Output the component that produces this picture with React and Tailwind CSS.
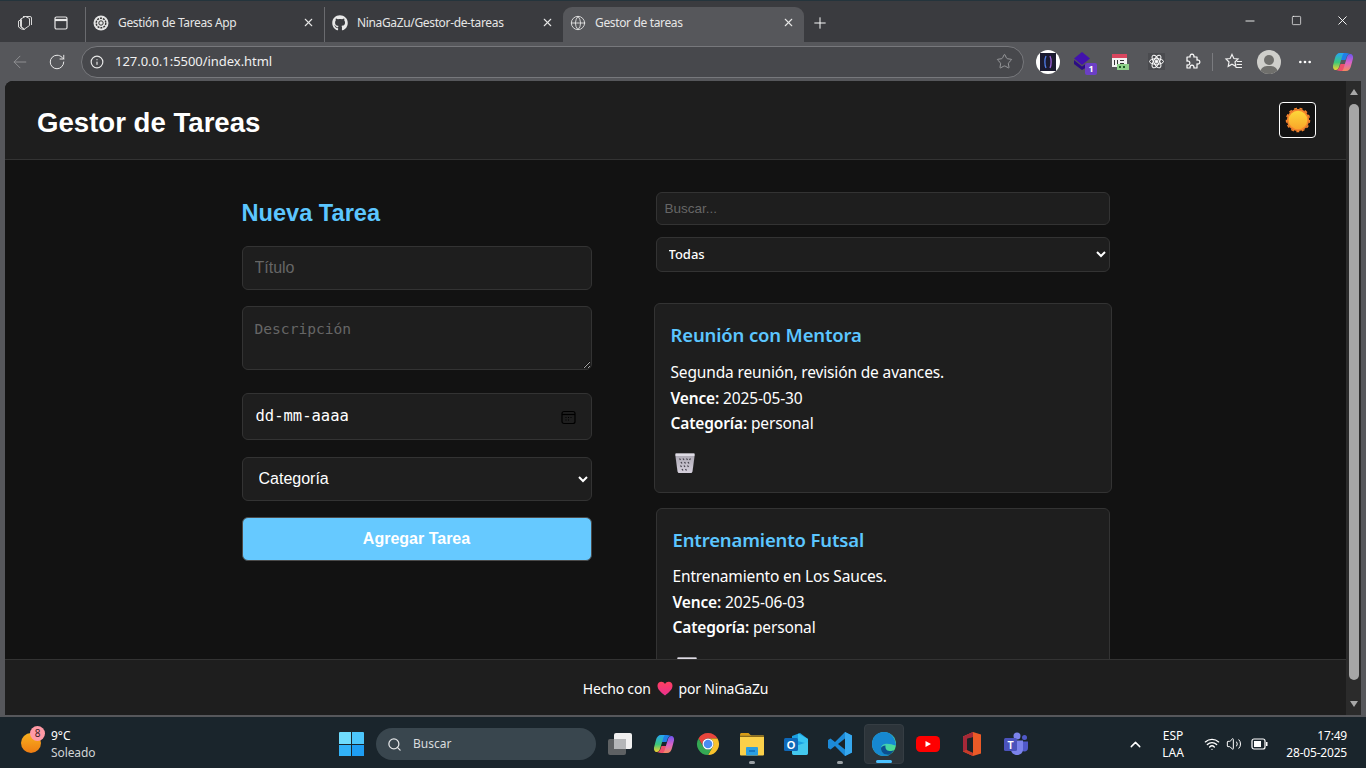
import { X, Plus, Minus, Square, ArrowLeft, RotateCw, Info, Star, Ellipsis, Search, ChevronUp, Wifi, Volume2, Globe } from 'lucide-react'
import { FaGithub } from 'react-icons/fa'

const ui = "font-['Noto_Sans',sans-serif]"

function Tab({ icon, title, active }) {
  return (
    <div className={`flex items-center h-[35px] pb-[4px] pl-[6px] pr-[6px] ${active ? 'w-[241px] bg-[#56575b] rounded-t-[9px]' : 'w-[239px] border-l border-[#6a6b6f]'}`}>
      <span className="w-[17px] h-[17px] flex items-center justify-center text-[#e8e8e8]">{icon}</span>
      <span className={`ml-[9px] flex-1 text-[12px] tracking-[-0.35px] text-[#e6e6e6] ${ui}`}>{title}</span>
      <X size={13} className="text-[#e6e6e6] mr-[3px]" />
    </div>
  )
}

function ChatIcon() {
  return (
    <svg width="16" height="16" viewBox="0 0 16 16">
      <circle cx="8" cy="8" r="7.5" fill="#e4e4e4" />
      <circle cx="8" cy="8" r="4.8" fill="none" stroke="#333" strokeWidth="1.4" strokeDasharray="2 1" />
      <circle cx="8" cy="8" r="2.2" fill="none" stroke="#333" strokeWidth="1" />
    </svg>
  )
}

function Workspaces() {
  return (
    <svg width="18" height="18" viewBox="0 0 18 18" fill="none" stroke="#d8d8d8" strokeWidth="1">
      <path d="M7 2.500h7a1.500 1.500 0 0 1 1.500 1.500v7" />
      <path d="M4.500 5l5-2.500 4 2v7l-5 3.500-4-2.500z" />
      <path d="M2.500 7l3-1.500v8l3 2-3-.5-3-2z" />
    </svg>
  )
}

function TabActions() {
  return (
    <svg width="16" height="16" viewBox="0 0 16 16" fill="none" stroke="#e8e8e8" strokeWidth="1.2">
      <rect x="2" y="2" width="12" height="12" rx="1.5" />
      <path d="M2 5h12" strokeWidth="2.2" />
    </svg>
  )
}

function Copilot({ id, size = 24 }) {
  return (
    <svg width={size} height={size} viewBox="0 0 24 24">
      <defs>
        <linearGradient id={`${id}l`} x1="0" y1="0" x2="0" y2="1">
          <stop offset="0" stopColor="#25a5f6" />
          <stop offset=".55" stopColor="#3cc77a" />
          <stop offset="1" stopColor="#f7d22e" />
        </linearGradient>
        <linearGradient id={`${id}r`} x1="0" y1="0" x2="0" y2="1">
          <stop offset="0" stopColor="#6d55f0" />
          <stop offset=".5" stopColor="#d863c9" />
          <stop offset="1" stopColor="#f58a5d" />
        </linearGradient>
      </defs>
      <path d="M9 3h6c2 0 3 1 4 1-2 0-3 1.500-3.500 3l-1 3H10z" fill="#1f7fe8" />
      <path d="M15 21H9c-2 0-3-1-4-1 2 0 3-1.500 3.500-3l1-3H14z" fill="#ee4f6a" />
      <path d="M9 3h4c-1 1-1.500 2-2 4l-3 10c-.4 1.500-1.500 3-3.500 3C3 20 1.500 18 2 15.500L4 8c.6-3 2.500-5 5-5z" fill={`url(#${id}l)`} />
      <path d="M15 21h-4c1-1 1.500-2 2-4l3-10c.4-1.500 1.500-3 3.500-3 1.500 0 3 2 2.500 4.500L20 16c-.6 3-2.500 5-5 5z" fill={`url(#${id}r)`} />
    </svg>
  )
}

function ToolbarIcons() {
  return (
    <div className="flex items-center">
      <div className="w-[24px] h-[24px] rounded-full bg-white flex items-center justify-center">
        <svg width="16" height="18" viewBox="0 0 16 18">
          <rect width="16" height="18" fill="#1b1b30" />
          <path d="M6 3C4.500 6 4.500 12 6 15" fill="none" stroke="#4f7de8" strokeWidth="1.300" />
          <path d="M10 3c1.500 3 1.500 9 0 12" fill="none" stroke="#9a5fd8" strokeWidth="1.300" />
        </svg>
      </div>
      <div className="relative w-[24px] h-[24px] ml-[12px]">
        <svg width="20" height="20" viewBox="0 0 20 20" className="mt-[1px] ml-[1px]">
          <path d="M9 1l8 6.500-8 6.500-8-6.500z" fill="#4212ae" />
          <path d="M1 9l8 6.500L14 12v4l-5 3-8-6z" fill="#2c0d85" />
        </svg>
        <span className={`absolute right-[-1px] bottom-[-1px] w-[12px] h-[12px] rounded-[2px] bg-[#6b3fc4] text-white text-[9px] leading-[12px] font-bold text-center ${ui}`}>1</span>
      </div>
      <svg className="ml-[12px]" width="24" height="24" viewBox="0 0 24 24">
        <rect x="4" y="4" width="15" height="4" fill="#d9465f" />
        <rect x="4" y="8" width="15" height="9" fill="#f2f2f2" />
        <path d="M6 10h1v5H6zM9 10h1v5H9zM12 10h4v1h-4zM12 13h4v1h-4z" fill="#333" />
        <rect x="9" y="14" width="12" height="6" fill="#8fd18a" />
        <path d="M11 16h2v2h-2zM15 16h2v2h-2z" fill="#1c5c24" />
      </svg>
      <div className="w-[24px] h-[24px] ml-[12px] flex items-center justify-center">
        <svg width="17" height="17" viewBox="0 0 17 17" fill="none" stroke="#fff" strokeWidth="1">
          <rect width="17" height="17" fill="#4a4b4f" stroke="none" />
          <ellipse cx="8.500" cy="8.500" rx="7" ry="2.800" />
          <ellipse cx="8.500" cy="8.500" rx="7" ry="2.800" transform="rotate(60 8.500 8.500)" />
          <ellipse cx="8.500" cy="8.500" rx="7" ry="2.800" transform="rotate(120 8.500 8.500)" />
          <circle cx="8.500" cy="8.500" r="1.300" fill="#fff" />
        </svg>
      </div>
      <svg className="ml-[15px]" width="18" height="18" viewBox="0 0 18 18" fill="none" stroke="#fff" strokeWidth="1.200" strokeLinejoin="round">
        <path d="M4 4h3.200a2 2 0 1 1 3.600 0H14v3.200a2 2 0 1 1 0 3.600V15H10.800a2 2 0 1 0-3.600 0H4v-3.200a2 2 0 1 0 0-3.600z" />
      </svg>
      <div className="w-px h-[18px] bg-[#7a7b7f] ml-[11px]" />
      <div className="ml-[11px]">
        <svg width="20" height="20" viewBox="0 0 20 20" fill="none" stroke="#f0f0f0" strokeWidth="1.200">
          <path d="M8 2.500l1.900 4 4.100.5-3 3 .8 4.400L8 12.300l-3.800 2.100.8-4.400-3-3 4.100-.5z" />
          <path d="M13 9.500h5M12.500 12.500h5.500M11.500 15.500h6.500" />
        </svg>
      </div>
      <div className="relative ml-[13px] w-[24px] h-[24px] rounded-full bg-[#cfcfcb] overflow-hidden">
        <div className="absolute left-[7px] top-[5px] w-[10px] h-[10px] rounded-full bg-[#6f6f6c]" />
        <div className="absolute left-[3px] top-[16px] w-[18px] h-[14px] rounded-full bg-[#6f6f6c]" />
      </div>
      <Ellipsis size={16} className="ml-[16px] text-white" />
      <div className="ml-[18px]"><Copilot id="cpt" size={24} /></div>
    </div>
  )
}

function TrashIcon({ className }) {
  return (
    <svg className={className} width="22" height="22" viewBox="0 0 22 22">
      <defs>
        <linearGradient id="trash" x1="0" y1="0" x2="0" y2="1">
          <stop offset="0" stopColor="#a9a5b0" />
          <stop offset="1" stopColor="#d5d0dc" />
        </linearGradient>
      </defs>
      <path d="M1.500 1.500h19v3l-2 15c-.2.800-.8 1.500-1.600 1.500H5.100c-.8 0-1.400-.7-1.600-1.500l-2-15z" fill="url(#trash)" />
      <rect x="1.500" y="1.500" width="19" height="2.500" rx=".5" fill="#dedbe4" />
      <path d="M5.500 6.500l1 1.500M9 6.500l1 1.500M12.500 6.500l1 1.500M16.500 6.500l-1 1.500M7 10l1 1.500M10.500 10l1 1.500M14 10l1 1.500M6.500 13.500l1 1.500M10 13.500l1 1.500M13.500 13.500l1 1.500M8 17l1 1.500M11.500 17l1 1.500" stroke="#45424c" strokeWidth="1.300" />
    </svg>
  )
}

function Card({ title, text, date, shifted }) {
  return (
    <div className={`bg-[#1e1e1e] border border-[#333] rounded-[6px] shrink-0 pt-[16px] pl-[16px] ${shifted ? 'w-[458px] -mx-[2px] h-[190px]' : 'w-[454px] mt-[15px] pb-[20px]'}`}>
      <h3 className={`text-[#5cc6ff] text-[18.500px] leading-[30px] font-semibold tracking-[-0.15px] ${ui}`}>{title}</h3>
      <div className={`${shifted ? 'mt-[10px]' : 'mt-[9px]'} text-white text-[15.500px] leading-[25.600px] tracking-[-0.15px] ${ui}`}>
        <p>{text}</p>
        <p><b className="font-semibold">Vence:</b> {date}</p>
        <p><b className="font-semibold">Categoría:</b> personal</p>
      </div>
      <TrashIcon className="mt-[15px] ml-[3px]" />
    </div>
  )
}

function ChromeLogo() {
  return (
    <svg width="24" height="24" viewBox="0 0 24 24">
      <path d="M2.470 6.500A11 11 0 0 1 21.530 6.500H12A5.500 5.500 0 0 0 7.240 14.750z" fill="#e8453c" />
      <path d="M21.530 6.500A11 11 0 0 1 12 23L16.760 14.750A5.500 5.500 0 0 0 12 6.500z" fill="#f8c22c" />
      <path d="M12 23A11 11 0 0 1 2.470 6.500L7.240 14.750A5.500 5.500 0 0 0 16.760 14.750z" fill="#34a853" />
      <circle cx="12" cy="12" r="5.500" fill="#fff" />
      <circle cx="12" cy="12" r="4.300" fill="#4a8cf0" />
    </svg>
  )
}

function Explorer() {
  return (
    <svg width="24" height="24" viewBox="0 0 24 24">
      <path d="M0 2.500C0 1.700.7 1 1.500 1h7l3 3H0z" fill="#d89b14" />
      <rect y="3.500" width="24" height="20" rx="1" fill="#fbd04a" />
      <rect y="3.500" width="24" height="1.500" fill="#8a6a1a" />
      <rect x="6" y="15" width="12" height="8.500" rx="1" fill="#2b9ee0" />
      <rect x="9" y="18" width="6" height="2" fill="#1678c2" />
    </svg>
  )
}

function Outlook() {
  return (
    <svg width="24" height="24" viewBox="0 0 24 24">
      <path d="M8 4l8-3 8 6v14c0 1-1 2-2 2H10c-1 0-2-1-2-2z" fill="#1ba0e2" />
      <path d="M14 1.500l10 5.500v5l-10-3z" fill="#38c4f2" />
      <path d="M8 15l16-5v11c0 1-1 2-2 2H10c-1 0-2-1-2-2z" fill="#43c8ee" />
      <rect y="6" width="14" height="13" rx="1.500" fill="#0e68b8" />
      <text x="7" y="16.500" textAnchor="middle" fontSize="11" fontWeight="700" fill="#fff" fontFamily="Liberation Sans">O</text>
    </svg>
  )
}

function VsCode() {
  return (
    <svg width="24" height="24" viewBox="0 0 24 24">
      <path d="M17 0l7 3.500v17L17 24 7 14 2.500 17.500 0 16v-8l2.500-1.500L7 10z" fill="#1c8ad8" />
      <path d="M17 0l7 3.500v17L17 24z" fill="#36a8ef" />
      <path d="M17 6.500L10 12l7 5.500z" fill="#1a2228" />
    </svg>
  )
}

function Edge() {
  return (
    <svg width="24" height="24" viewBox="0 0 24 24">
      <defs>
        <linearGradient id="edgeg" x1="0" y1="0" x2="1" y2="1">
          <stop offset="0" stopColor="#35c1f1" />
          <stop offset="1" stopColor="#4ee07a" />
        </linearGradient>
      </defs>
      <circle cx="12" cy="12" r="12" fill="url(#edgeg)" />
      <path d="M0 12c0 7 5.500 12 12 12 2.500 0 4.500-.6 6-1.600-4.500 1-9-1.400-9-6 0-2.200 1.500-4 4-4.400 4-.6 7 .8 11 1.500C23.500 6 19 0 12 0 5 0 0 5.500 0 12z" fill="#1688d0" />
      <path d="M9 16.500c0 4.500 4 7 9 5.900 1.500-1 3-2.300 4-4.400-1.200.8-3 1.200-4.500 1-3-.3-4.500-2.500-4-5.500-2.500.4-4.500 1-4.500 3z" fill="#0c4f8f" />
    </svg>
  )
}

function YouTube() {
  return (
    <svg width="24" height="16" viewBox="0 0 24 16">
      <rect width="24" height="16" rx="4.500" fill="#f00" />
      <path d="M9.500 5l5.500 3-5.500 3z" fill="#fff" />
    </svg>
  )
}

function Office() {
  return (
    <svg width="18" height="24" viewBox="0 0 18 24">
      <path d="M10 0l8 2.500v19L10 24 0 19.500V4.500z" fill="#eb5a27" />
      <path d="M10 0L0 4.500v15L4 18V6.500l6-1.500z" fill="#a52838" />
      <path d="M4 6.500l6-1.500v16l-6-2z" fill="#1a2228" />
      <path d="M0 19.500L10 24v-3l-6-3z" fill="#c73a2a" />
    </svg>
  )
}

function Teams() {
  return (
    <svg width="24" height="24" viewBox="0 0 24 24">
      <circle cx="13" cy="4" r="3.500" fill="#7b83eb" />
      <circle cx="20.500" cy="5.500" r="2.500" fill="#5059c9" />
      <path d="M17 9.500h7v6.500c0 2-1.500 3.500-3.500 3.500S17 18 17 16z" fill="#5059c9" />
      <path d="M7 8.500h12v9c0 3-2.500 5.500-6 5.500s-6-2.500-6-5.500z" fill="#7b83eb" />
      <rect y="6" width="13" height="13" rx="1.500" fill="#4b53bc" />
      <text x="6.500" y="16.500" textAnchor="middle" fontSize="10" fontWeight="700" fill="#fff" fontFamily="Liberation Sans">T</text>
    </svg>
  )
}

function TaskIcon({ children, active, dot }) {
  return (
    <div className={`relative w-[40px] h-[40px] mx-[2px] flex items-center justify-center rounded-[4px] ${active ? 'bg-[#2c343a] border border-[#353d43]' : ''}`}>
      {children}
      {dot && <span className="absolute bottom-0 left-[17px] w-[6px] h-[3px] rounded-full bg-[#9aa0a4]" />}
      {active && <span className="absolute bottom-0 left-[11px] w-[16px] h-[3px] rounded-full bg-[#4cc2ff]" />}
    </div>
  )
}

function Taskbar() {
  return (
    <div className={`h-[51px] shrink-0 bg-[#1a252c] pt-[3px] flex items-center text-white ${ui}`}>
      <div className="w-[339px] flex items-center pl-[20px] shrink-0">
        <div className="relative w-[26px] h-[30px]">
          <div className="absolute left-[1px] top-[4px] w-[20px] h-[20px] rounded-full bg-gradient-to-b from-[#f7b11f] to-[#ee7c12]" />
          <span className="absolute left-[10px] top-[-3px] w-[15px] h-[15px] rounded-full bg-[#ff9aa6] text-[#3a1a1f] text-[10px] leading-[15px] text-center">8</span>
        </div>
        <div className="ml-[5px] -mt-[1px]">
          <div className="text-[12px] leading-[17px]">9°C</div>
          <div className="text-[12px] leading-[17px] tracking-[-0.1px] text-[#d0d4d6]">Soleado</div>
        </div>
      </div>
      <div className="w-[25px] h-[24px] grid grid-cols-2 gap-[1px] shrink-0">
        <span className="bg-[#6fdcfd] rounded-tl-[1px]" />
        <span className="bg-[#4cc6fb] rounded-tr-[1px]" />
        <span className="bg-[#32b2f8]" />
        <span className="bg-[#1e9df2]" />
      </div>
      <div className="ml-[12px] w-[220px] h-[32px] rounded-full bg-[#39464e] flex items-center pl-[11px] shrink-0">
        <Search size={15} className="text-[#e4e6e8]" strokeWidth={2} />
        <span className="ml-[11px] text-[12px] text-[#d8dcde]">Buscar</span>
      </div>
      <div className="ml-[2px] flex items-center shrink-0">
        <TaskIcon>
          <div className="relative w-[24px] h-[22px]">
            <span className="absolute left-0 bottom-0 w-[18px] h-[16px] rounded-[2px] bg-[#5e6163]" />
            <span className="absolute right-0 top-0 w-[18px] h-[16px] rounded-[2px] bg-[#f0f0f0]" />
            <span className="absolute left-[6px] top-[6px] w-[12px] h-[10px] bg-[#b4b6b8]" />
          </div>
        </TaskIcon>
        <TaskIcon><Copilot id="cpb" size={24} /></TaskIcon>
        <TaskIcon><ChromeLogo /></TaskIcon>
        <TaskIcon dot><Explorer /></TaskIcon>
        <TaskIcon><Outlook /></TaskIcon>
        <TaskIcon dot><VsCode /></TaskIcon>
        <TaskIcon active><Edge /></TaskIcon>
        <TaskIcon><YouTube /></TaskIcon>
        <TaskIcon><Office /></TaskIcon>
        <TaskIcon><Teams /></TaskIcon>
      </div>
      <ChevronUp size={17} className="ml-[89px] shrink-0 text-white" />
      <div className="ml-[12px] w-[34px] shrink-0 text-center text-[12px] leading-[17px] text-white">
        <div>ESP</div>
        <div>LAA</div>
      </div>
      <Wifi size={16} className="ml-[14px] shrink-0 text-white" />
      <Volume2 size={16} className="ml-[6px] shrink-0 text-white" strokeWidth={1.500} />
      <svg className="ml-[9px] shrink-0" width="18" height="12" viewBox="0 0 18 12" fill="none">
        <rect x="1" y="1" width="13" height="10" rx="2" stroke="#fff" strokeWidth="1.200" />
        <rect x="3" y="3" width="7" height="6" fill="#fff" />
        <rect x="15" y="4" width="1.500" height="4" fill="#fff" />
      </svg>
      <div className="ml-[12px] w-[66px] shrink-0 text-right text-[12px] leading-[17px] tracking-[-0.2px]">
        <div>17:49</div>
        <div>28-05-2025</div>
      </div>
    </div>
  )
}

export default function App() {
  const field = "block w-full shrink-0 bg-[#1e1e1e] border border-[#333] rounded-[6px] text-white outline-none"
  return (
    <div className="w-[1366px] h-[768px] flex flex-col overflow-hidden bg-[#56575b]">
      {/* tabs */}
      <div className="h-[42px] shrink-0 bg-[#3a3b3f] border-t border-[#24343c] flex items-end">
        <div className="w-[85px] h-[35px] pb-[4px] flex items-center pl-[16px] shrink-0">
          <Workspaces />
          <span className="ml-[19px]"><TabActions /></span>
        </div>
        <Tab icon={<ChatIcon />} title="Gestión de Tareas App" />
        <Tab icon={<FaGithub size={16} />} title="NinaGaZu/Gestor-de-tareas" />
        <Tab icon={<Globe size={16} strokeWidth={1.300} />} title="Gestor de tareas" active />
        <Plus size={18} strokeWidth={1.300} className="ml-[7px] mb-[10px] text-white shrink-0" />
        <div className="flex-1" />
        <div className="flex items-center mb-[14px] text-white">
          <Minus size={14} strokeWidth={1.500} />
          <Square size={11} strokeWidth={1.500} className="ml-[34px]" />
          <X size={15} strokeWidth={1.500} className="ml-[33px] mr-[16px]" />
        </div>
      </div>

      {/* toolbar */}
      <div className="h-[39px] shrink-0 flex items-center">
        <ArrowLeft size={20} strokeWidth={1.200} className="ml-[10px] text-[#8e8f92]" />
        <RotateCw size={18} strokeWidth={1.300} className="ml-[18px] text-[#ececec]" />
        <div className="ml-[15px] w-[943px] h-[32px] rounded-full border border-[#77787c] bg-[#47484c] flex items-center">
          <Info size={14} className="ml-[8px] text-[#e8e8e8]" />
          <span className={`ml-[11px] flex-1 text-[13px] text-[#f0f0f0] tracking-[-0.04px] ${ui}`}>127.0.0.1:5500/index.html</span>
          <Star size={17} strokeWidth={1.200} className="mr-[10px] text-[#a4a5a8]" />
        </div>
        <div className="ml-[12px]"><ToolbarIcons /></div>
      </div>

      {/* page */}
      <div className="flex-1 min-h-0 flex pl-[5px] pr-[5px] pb-[2px]">
        <div className="w-[1341px] flex flex-col rounded-tl-[8px] overflow-hidden bg-[#121212]">
          <header className="h-[79px] shrink-0 bg-[#1e1e1e] border-b border-[#333] flex items-center justify-between pl-[32px] pr-[30px]">
            <h1 className="mt-[6px] text-white text-[27.600px] font-bold font-['Liberation_Sans',sans-serif]">Gestor de Tareas</h1>
            <button className="w-[37px] h-[36px] rounded-[4px] border border-white bg-[#121212] flex items-center justify-center">
              <svg width="26" height="26" viewBox="0 0 26 26">
                <defs>
                  <linearGradient id="sun" x1="0" y1="0" x2="0" y2="1">
                    <stop offset="0" stopColor="#fdd83a" />
                    <stop offset="1" stopColor="#f9a62a" />
                  </linearGradient>
                </defs>
                <circle cx="13" cy="13" r="11" fill="#f5842c" />
                <circle cx="13" cy="13" r="11.500" fill="none" stroke="#f5842c" strokeWidth="1.500" strokeDasharray="3 2.540" />
                <circle cx="13" cy="13" r="9.300" fill="url(#sun)" />
              </svg>
            </button>
          </header>

          <main className="flex-1 min-h-0 overflow-hidden flex justify-center gap-[64px]">
            <section className="w-[350px] shrink-0 font-['Liberation_Sans',sans-serif]">
              <h2 className="mt-[39px] text-[#5cc6ff] text-[23.600px] leading-[28px] font-bold">Nueva Tarea</h2>
              <input className={`${field} mt-[19px] h-[44px] px-[12px] text-[16px] placeholder:text-[#666]`} placeholder="Título" />
              <textarea className={`${field} mt-[16px] h-[64px] px-[12px] pt-[11px] text-[14.600px] font-['DejaVu_Sans_Mono',monospace] placeholder:text-[#666]`} placeholder="Descripción" />
              <div className={`${field} mt-[23px] h-[47px] pl-[13px] pr-[15px] pt-[1px] flex items-center justify-between text-[15.500px] font-['DejaVu_Sans_Mono',monospace]`}>
                <span>dd-mm-aaaa</span>
                <svg width="15" height="15" viewBox="0 0 15 15" fill="none" stroke="#000" strokeWidth="1.200">
                  <rect x="1" y="1.500" width="13" height="12" rx="2" />
                  <path d="M1 4.500h13" />
                  <path d="M4.500 7.500h1M7 7.500h1M9.500 7.500h1M4.500 10h1M7 10h1" />
                </svg>
              </div>
              <select className={`${field} mt-[17px] h-[44px] pl-[12px] pb-[2px] text-[16px]`} defaultValue="Categoría">
                <option>Categoría</option>
              </select>
              <button className="block w-full mt-[16px] h-[44px] rounded-[6px] bg-[#66c9ff] border border-[#4a4a4a] text-white text-[16px] font-bold">Agregar Tarea</button>
            </section>

            <section className="w-[454px] shrink-0 flex flex-col">
              <input className={`${field} mt-[32px] h-[33px] px-[8px] text-[13.500px] font-['Liberation_Sans',sans-serif] placeholder:text-[#666]`} placeholder="Buscar..." />
              <select className={`${field} mt-[12px] h-[35px] pl-[8px] pb-[2px] text-[13px] font-medium ${ui}`} defaultValue="Todas">
                <option>Todas</option>
              </select>
              <div className="mt-[31px] shrink-0"><Card shifted title="Reunión con Mentora" text="Segunda reunión, revisión de avances." date="2025-05-30" /></div>
              <Card title="Entrenamiento Futsal" text="Entrenamiento en Los Sauces." date="2025-06-03" />
            </section>
          </main>

          <footer className={`h-[56px] shrink-0 relative bg-[#1e1e1e] border-t border-[#333] pt-[2px] flex items-center justify-center text-white text-[14px] tracking-[-0.2px] ${ui}`}>
            <span>Hecho con</span>
            <svg className="mx-[6px]" width="16" height="15" viewBox="0 0 16 15">
              <defs>
                <linearGradient id="heart" x1="0" y1="0" x2="0" y2="1">
                  <stop offset="0" stopColor="#ff4060" />
                  <stop offset="1" stopColor="#e8308e" />
                </linearGradient>
              </defs>
              <path d="M8 14.500C4 11.500.5 8.500.5 4.800.5 2.400 2.300.8 4.300.8 5.800.8 7.200 1.600 8 3c.8-1.400 2.200-2.200 3.700-2.200 2 0 3.800 1.600 3.800 4 0 3.700-3.500 6.700-7.500 9.700z" fill="url(#heart)" />
            </svg>
            <span>por NinaGaZu</span>
          </footer>
        </div>
        <div className="w-[15px] bg-[#2b2b2b] flex flex-col items-center">
          <span className="mt-[8px] w-0 h-0 border-x-[4px] border-x-transparent border-b-[6px] border-b-[#a8a8a8]" />
          <span className="mt-[9px] w-[10px] h-[576px] rounded-full bg-[#a6a6a6]" />
          <span className="mt-auto mb-[8px] w-0 h-0 border-x-[4px] border-x-transparent border-t-[6px] border-t-[#a8a8a8]" />
        </div>
      </div>

      <Taskbar />
    </div>
  )
}
